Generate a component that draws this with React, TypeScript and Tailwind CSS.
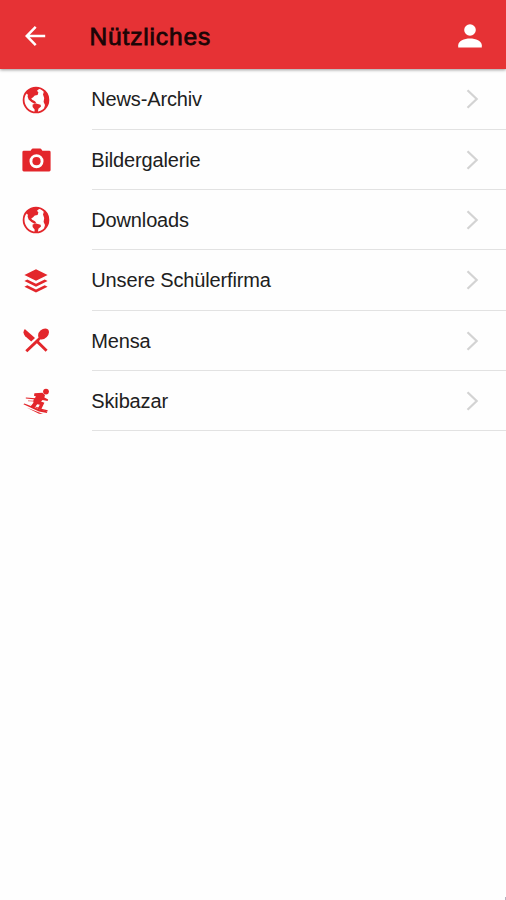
import React from "react";

const Globe = () => (
  <svg width="28" height="28" viewBox="0 0 28 28" fill="#e3262b">
    <circle cx="14" cy="14" r="12.4" fill="none" stroke="#e3262b" strokeWidth="1.8" />
    <path d="M8.6 2.6 L15.6 1.4 L17.6 2.6 L15 4.8 L16.4 6.6 L15.6 9 L12.8 9.4 L10.8 11.6 L9.2 12.4 L10.2 13.8 L13 15.2 L14.4 17.2 L12.4 17.8 L9.4 16 L6.6 13.6 L5.6 10.4 L6 8.4 L4.2 8 L5 5.2 Z" />
    <path d="M10.6 18.4 L14 17.4 L18.6 18.8 L19 20.6 L16.4 22.8 L15.8 26.4 L12.6 26.4 L12.6 23.4 L10.6 21 Z" />
    <path d="M19.6 2.6 L21.8 5.8 L21 8.6 L22.2 12 L21.6 16 L23 19 L22 22.8 L25.8 18.4 L27 13.4 L25.8 8.4 L23.4 5 Z" />
  </svg>
);

const Camera = () => (
  <svg width="29" height="24" viewBox="0 0 29 24" fill="#e3262b">
    <path fillRule="evenodd" d="M1.8 2.8H8.6L9.8.9Q10.1.5 10.7.5H18.3Q18.9.5 19.2.9L20.4 2.8H27.2Q28.6 2.8 28.6 4.2V22Q28.6 23.4 27.2 23.4H1.8Q.4 23.4.4 22V4.2Q.4 2.8 1.8 2.8ZM14.5 6.2a7 7 0 1 0 0 14a7 7 0 1 0 0-14Z" />
    <circle cx="14.5" cy="13.2" r="4.1" />
  </svg>
);

const Layers = () => (
  <svg width="24" height="24" viewBox="0 0 24 24" fill="#e3262b">
    <path d="M12 .2 23.6 6 12 11.8.4 6Z" />
    <path d="M.4 12 3.3 10.5 12 14.8 20.7 10.5 23.6 12 12 17.8Z" />
    <path d="M.4 17.7 3.3 16.2 12 20.5 20.7 16.2 23.6 17.7 12 23.5Z" />
  </svg>
);

const Restaurant = () => (
  <svg width="26" height="25" viewBox="0 0 26 25" fill="#e3262b">
    <path d="M1.8 1 12 10.1 8.2 13.6 2.2 8.2Q-1 4.6 1.8 1Z" />
    <path d="M16 13.2 24.6 21.8 22.6 23.8 13.9 15.2 4.3 24.3 2.3 22.3 15.6 9.6Q14 5.8 17.4 2.6 21.6-.7 25.1 1.5 27.4 4.8 23.8 8.9 20.4 12.2 17.1 11.4Z" />
  </svg>
);

const Skier = () => (
  <svg width="27" height="27" viewBox="0 0 27 27" fill="#e3262b">
    <circle cx="23" cy="3.6" r="2.9" />
    <path d="M11.4 5.2 19.4 4.8 22 7 21.4 9.4 25.2 11.6 24.6 12.9 19.6 12 18 13.6 21.4 14.8 18 21.8 14.6 20.8 16.8 16.8 14.2 16.2 11 20.4 7.4 18.8 10.4 14.8 10.4 12 13 8.6 11 7.8Z" />
    <path d="M2.8 9.4 15.6 10.4 15.4 11.7 2.8 10.6Z" />
    <path d="M5 12.3 12 12.8 11.8 13.7 5 13.2Z" opacity=".6" />
    <path d="M.4 16.3 1.4 15.4 16.4 21.2 24.4 23.6 23.9 24.9 16 23.4Z" />
    <path d="M6.8 16.6 19.4 21 24.8 22.2 24.4 23.3 18.8 22.6Z" />
    <path d="M3.5 19.6 14.4 23.8 20 26 16 25.8Z" />
  </svg>
);

const rows = [
  { label: "News-Archiv", Icon: Globe },
  { label: "Bildergalerie", Icon: Camera },
  { label: "Downloads", Icon: Globe },
  { label: "Unsere Schülerfirma", Icon: Layers },
  { label: "Mensa", Icon: Restaurant },
  { label: "Skibazar", Icon: Skier },
];

export default function App() {
  return (
    <div className="relative h-[900px] w-[506px] overflow-hidden bg-[#fefefe] font-['Liberation_Sans',Arial,sans-serif]">
      <header className="flex h-[69px] items-center bg-[#e63235] pt-[2px] pr-6 pl-[25px] shadow-[0_1px_3px_rgba(0,0,0,0.4)]">
        <svg width="21" height="20" viewBox="0 0 21 20" fill="none" stroke="#fff" strokeWidth="2.5">
          <path d="M20.2 10H2.2M10.7.9 1.7 10l9 9.1" />
        </svg>
        <h1 className="ml-[43.5px] flex-1 pt-[3px] text-[24.5px] leading-[30px] tracking-[0.85px] text-[#1b0506] [-webkit-text-stroke:0.8px_#1b0506]">Nützliches</h1>
        <svg width="24" height="24" viewBox="0 0 24 24" fill="#fff">
          <circle cx="12" cy="6" r="5.8" />
          <path d="M.2 23.4v-2.2c0-4 6-6.6 11.8-6.6s11.8 2.6 11.8 6.6v2.2Z" />
        </svg>
      </header>
      <ul className="pt-[0.5px]">
        {rows.map(({ label, Icon }) => (
          <li key={label} className="flex h-[60.3px]">
            <div className="flex w-[92px] items-center pr-5">
              <span className="flex w-full justify-center">
                <Icon />
              </span>
            </div>
            <div className="flex flex-1 items-center justify-between border-b border-[#e2e2e2] pt-[0.6px] pr-[27px] text-[20px] text-[#202020]">
              <span className="-ml-[0.7px] tracking-[-0.15px]">{label}</span>
              <svg width="13" height="20" viewBox="0 0 13 20" fill="none" stroke="#d3d3d3" strokeWidth="2.2">
                <path d="M1.5 1.2 10.7 10l-9.2 8.8" />
              </svg>
            </div>
          </li>
        ))}
      </ul>
      <span className="absolute right-0 bottom-0 h-[3px] w-px bg-[#b4b2c0]" />
    </div>
  );
}
